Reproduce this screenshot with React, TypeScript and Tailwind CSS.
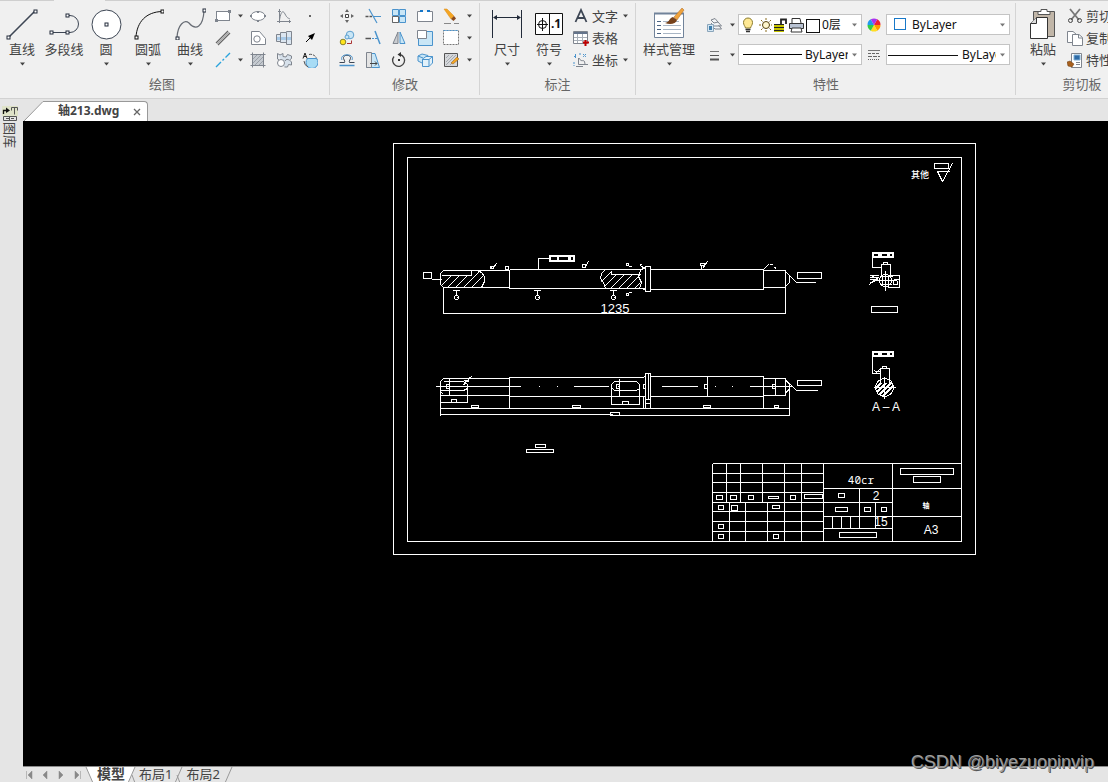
import type { ReactNode } from "react";

const INK = "#3d4654";
const BLUE = "#4a93cc";
const PALE = "#c9e6f6";

function Caret({ className = "text-[#444]" }: { className?: string }) {
  return (
    <svg width="5" height="4" viewBox="0 0 5 4" className={"shrink-0 " + className} aria-hidden="true">
      <path d="M0 0.500H5L2.500 3.500Z" fill="currentColor" />
    </svg>
  );
}

function Icon({ size = 16, children }: { size?: number; children: ReactNode }) {
  return (
    <svg width={size} height={size} viewBox={`0 0 ${size} ${size}`} fill="none" stroke="#7f858e" className="shrink-0" aria-hidden="true">
      {children}
    </svg>
  );
}

function Node({ x, y, c = "#222b3a" }: { x: number; y: number; c?: string }) {
  return <rect x={x - 1.5} y={y - 1.5} width="3" height="3" fill="#fff" stroke={c} />;
}

function BigButton({ label, icon, caret = true, wide = false }: { label: string; icon: ReactNode; caret?: boolean; wide?: boolean }) {
  return (
    <button type="button" className={"flex shrink-0 flex-col items-center pt-[3px] " + (wide ? "w-[60px]" : "w-[42px]")}>
      <Icon size={32}>{icon}</Icon>
      <span className="whitespace-nowrap text-[13px] leading-[18px] text-[#444]">{label}</span>
      {caret && <Caret className="mt-1 text-[#444]" />}
    </button>
  );
}

function SmallButton({ label, children, narrow = false }: { label: string; children: ReactNode; narrow?: boolean }) {
  return (
    <button type="button" aria-label={label} className={"flex h-[22px] items-center justify-center " + (narrow ? "w-6" : "w-[26px]")}>
      <Icon>{children}</Icon>
    </button>
  );
}

function CaretButton({ label }: { label: string }) {
  return (
    <button type="button" aria-label={label} className="flex h-[22px] w-[10px] items-center justify-center">
      <Caret />
    </button>
  );
}

function RowButton({ label, caret, children }: { label: string; caret?: boolean; children: ReactNode }) {
  return (
    <button type="button" className="flex h-[22px] shrink-0 items-center whitespace-nowrap text-[13px] leading-[18px] text-[#444]">
      <Icon>{children}</Icon>
      <span className="ml-[3px] pb-px">{label}</span>
      {caret && <Caret className="ml-[5px] text-[#444]" />}
    </button>
  );
}

function Group({ title, className, children, last }: { title: string; className: string; children: ReactNode; last?: boolean }) {
  return (
    <section
      aria-label={title}
      className={"mt-[2px] mb-[3px] flex shrink-0 flex-col justify-between pt-[2px] pb-[2px] " + (last ? "" : "border-r border-[#d4d4d4] ") + className}
    >
      <div className="flex">{children}</div>
      <h2 className="text-center text-[13px] leading-[18px] text-[#666]">{title}</h2>
    </section>
  );
}

function DrawGroup() {
  return (
    <Group title="绘图" className="w-[330px] pr-[6px] pl-px">
      <BigButton label="直线" icon={<><path d="M3 29L29 3" stroke={INK} strokeWidth="1.600" /><Node x={2.5} y={29.5} /><Node x={29.5} y={3.5} /></>} />
      <BigButton label="多段线" caret={false} icon={<><path d="M3 24.500H19M19 7.500H22A8.500 8.500 0 0 1 22 24.500H19" stroke={INK} /><Node x={3.5} y={24.5} /><Node x={19.5} y={24.5} /><Node x={19.5} y={7.5} /></>} />
      <BigButton label="圆" icon={<><circle cx="16.500" cy="16.500" r="14.500" fill="#fff" stroke={INK} /><Node x={16.5} y={16.5} /></>} />
      <BigButton label="圆弧" icon={<><path d="M4 29C5 14 14 4 30 3.500" stroke="#111" /><Node x={4.5} y={29.5} c="#111" /><Node x={30.5} y={3.5} c="#111" /></>} />
      <BigButton label="曲线" icon={<><path d="M3 29C4 17 10 11 15 15C22 23 29 19 30 3" stroke="#666b73" strokeWidth="1.200" /><Node x={3.5} y={30.5} /><Node x={30.5} y={2.5} /></>} />
      <div className="grid grid-cols-[24px_10px_26px_26px_26px]">
        <SmallButton label="矩形" narrow><rect x="1.500" y="3.500" width="13" height="9" fill="#fff" /><path d="M0 11h3v3H0z M13 2h3v3h-3z" fill="#7f858e" stroke="none" /></SmallButton>
        <CaretButton label="矩形选项" />
        <SmallButton label="椭圆"><ellipse cx="8" cy="8" rx="7" ry="4.500" fill="#fff" /><path d="M0 7h2v2H0zM14 7h2v2h-2zM7 3h2v2H7zM7 12h2v2H7z" fill="#7f858e" stroke="none" /></SmallButton>
        <SmallButton label="曲线图"><path d="M3.500 1V15M1 13.500H15M5 3.500h-3M13.500 12v3" /><path d="M3.500 12C5 3 7 2 9 6S12 10 14 11" /></SmallButton>
        <SmallButton label="点"><rect x="7" y="7" width="2" height="2" fill="#666" stroke="none" /></SmallButton>

        <SmallButton label="双线" narrow><path d="M1 13L13 1M3 15L15 3" stroke="#666" strokeWidth="1.300" /><path d="M2 14L14 2" stroke="#aaa" strokeWidth="1" /></SmallButton>
        <span />
        <SmallButton label="面域"><path d="M1.500 1.500H9.500L15.500 8.500V14.500H1.500Z" fill="#fff" /><circle cx="7" cy="9" r="3.200" /></SmallButton>
        <SmallButton label="轴"><path d="M0.500 4.500H4.500V2.500H10.500V1.500H15.500V14.500H10.500V12.500H4.500V11.500H0.500Z" fill="#dce6f0" /><path d="M1 7h14v3H1z" fill="#a8cae8" stroke="none" /><path d="M4.500 4v8M10.500 3v10" /></SmallButton>
        <SmallButton label="箭头"><path d="M4 12L9 7" stroke="#000" /><path d="M13 3L6 6L10 10Z" fill="#000" stroke="none" /></SmallButton>

        <SmallButton label="构造线" narrow><path d="M1 15L6 10M7.500 8.500L9 7M10.500 5.500L15 1" stroke="#29a3dc" strokeWidth="1.400" /></SmallButton>
        <CaretButton label="构造线选项" />
        <SmallButton label="填充"><path d="M3 3H13V13H3Z" fill="#c5cad0" stroke="none" /><path d="M0.500 2.500H15.500M2.500 0.500V15.500M0.500 13.500H15.500M13.500 0.500V15.500" /><path d="M3 7L7 3M3 11L11 3M5 13L13 5M9 13L13 9" stroke="#9aa0a8" /></SmallButton>
        <SmallButton label="齿轮"><path d="M1.500 1.500L4 3L7 1.500V4.500L10 5L11.500 2.500L15.500 4V6.500L13.500 8L15.500 10V13L12.500 12.500L11.500 15H8.500M1.500 1.500V7L3 8" fill="#d7e1eb" /><circle cx="5" cy="11" r="3.500" fill="#fff" /><path d="M9 9C10 7 12 7 13 8" /></SmallButton>
        <SmallButton label="局部放大"><path d="M7 2.500A6.500 6.500 0 0 1 15 8" stroke="#555" strokeDasharray="3 1" /><path d="M5.500 6.500H14.500A6 6 0 1 1 5.500 6.500Z" fill="#a8dcf5" stroke={BLUE} /><path d="M2 9A7 7 0 0 0 6 15" stroke="#555" /><path d="M1 6.500L3 1L5 6.500M2 4.500H4.500" stroke="#222" /></SmallButton>
      </div>
    </Group>
  );
}

function ModifyGroup() {
  return (
    <Group title="修改" className="w-[150px] pr-[3px] pl-1">
      <div className="grid grid-cols-[26px_26px_26px_26px_26px_8px]">
        <SmallButton label="移动"><path d="M6.500 6.500h3v3h-3z" fill="#fff" stroke="#444" /><path d="M8 1L10 4H6zM8 15L6 12h4zM1 8L4 6v4zM15 8L12 10V6z" fill="#666" stroke="none" /></SmallButton>
        <SmallButton label="修剪"><path d="M0.500 8.500H7" stroke="#555" strokeWidth="1.500" strokeDasharray="3 1" /><path d="M8 8.500H16" stroke={BLUE} /><path d="M4 1L12 15" stroke={BLUE} strokeWidth="1.200" /></SmallButton>
        <SmallButton label="阵列"><path d="M1.500 1.500h6v6h-6zM8.500 1.500h6v6h-6zM1.500 8.500h6v6h-6zM8.500 8.500h6v6h-6z" fill={PALE} stroke={BLUE} /><path d="M1.500 8.500h6v6h-6z" fill="#fff" stroke="#666" /></SmallButton>
        <SmallButton label="打断"><path d="M4 3.500H0.500V13.500H15.500V3.500H12" fill="#fff" /><path d="M3 2h3v2H3zM10 2h3v2h-3z" fill="#1676c8" stroke="none" /></SmallButton>
        <SmallButton label="删除"><path d="M1 1L4 1L11 8L8 11Z" fill="#f5a623" stroke="#d88b1b" strokeWidth="0.500" /><path d="M8 11L11 8L13 10.500L10.500 13Z" fill="#8a4b20" stroke="none" /><path d="M1 15.500H8M11 15.500H16" stroke="#888" /></SmallButton>
        <CaretButton label="删除选项" />

        <SmallButton label="复制对象"><circle cx="11" cy="5" r="3.800" fill={PALE} stroke="#5d9fce" /><circle cx="8" cy="7" r="2" fill={PALE} stroke="#5d9fce" /><circle cx="4" cy="12" r="2.800" fill="#ffe41a" stroke="#8b8430" /><path d="M8 13.500H12.500V10.500" stroke="#a33" /></SmallButton>
        <SmallButton label="延伸"><path d="M0.500 8.500H6" stroke="#555" strokeWidth="1.500" /><path d="M7 8.500H12" stroke={BLUE} strokeDasharray="2 1" /><path d="M10 1L15 14" stroke={BLUE} strokeWidth="1.500" /></SmallButton>
        <SmallButton label="镜像"><path d="M7 2V13.500H2Z" fill="#c9ccd0" /><path d="M9 2V13.500H14Z" fill={PALE} stroke={BLUE} /></SmallButton>
        <SmallButton label="缩放"><path d="M1.500 1.500H15.500V15.500H1.500Z" fill={PALE} stroke={BLUE} /><path d="M0.500 0.500H9.500V8.500H0.500Z" fill="#fff" /></SmallButton>
        <SmallButton label="选择框"><path d="M0.500 0.500H15.500V14.500H0.500Z" fill="#fff" stroke="#777" strokeDasharray="2 1" /><path d="M0.500 0.500H15.500" stroke={BLUE} strokeDasharray="2 1" /></SmallButton>
        <CaretButton label="选择框选项" />

        <SmallButton label="偏移"><path d="M0.500 10.500H5.500C6.500 9 4 7 4.500 5.500C5 2.500 11 2.500 11.500 5.500C12 7 9.500 9 10.500 10.500H15.500" stroke={INK} /><path d="M0.500 13.500H15.500" stroke={BLUE} strokeWidth="1.500" /><path d="M3 8C0 1 16 1 13 8" stroke={BLUE} /></SmallButton>
        <SmallButton label="拉伸"><path d="M1.500 1.500H10L14.500 15.500H1.500Z" fill={PALE} stroke={BLUE} /><path d="M1.500 0.500H6.500V15.500H1.500Z" fill="#e4e4e4" /><path d="M5 11.500H12M10 9.500L12 11.500L10 13.500" stroke="#444" /></SmallButton>
        <SmallButton label="旋转"><path d="M9 2.500A6 6 0 1 1 3 4.500" stroke="#444" strokeWidth="1.300" /><path d="M10 0V5L6.500 2.500Z" fill="#333" stroke="none" /><rect x="7" y="7" width="2" height="2" fill="#333" stroke="none" /></SmallButton>
        <SmallButton label="复制实体"><path d="M1 4L5 2L11 3.500V9L6 11.500L1 9Z" fill={PALE} stroke={BLUE} /><path d="M5.500 7L9 4.500H15.500V11L12 14.500H5.500Z" fill="#e2f1fa" stroke={BLUE} /><path d="M5.500 7.500H12V14.500M12 7.500L15.500 4.500M1 4L6 6" stroke={BLUE} /></SmallButton>
        <SmallButton label="编辑填充"><path d="M1.500 1.500H14.500V14.500H1.500Z" fill="#d5d7da" stroke="#555" /><path d="M3 6L6 3M3 10L10 3M3 13L13 3M7 13L13 7" stroke="#a3a8ae" /><path d="M8 11L14 5L16 7L10 12Z" fill="#f5a623" stroke="#8a5b20" strokeWidth="0.500" /></SmallButton>
        <CaretButton label="编辑填充选项" />
      </div>
    </Group>
  );
}

function AnnotateGroup() {
  return (
    <Group title="标注" className="w-[156px]">
      <div className="flex pl-[6px]">
        <BigButton label="尺寸" icon={<><path d="M1.500 2V30M30.500 2V30M3 9.500H29" stroke="#222b3a" /><path d="M2 9.500L6 7v5zM30 9.500L26 7v5z" fill="#222b3a" stroke="none" /></>} />
        <BigButton label="符号" icon={<><path d="M2.500 5.500H29.500V26.500H2.500ZM16.500 5.500V26.500" fill="#fff" stroke="#111" /><circle cx="9.500" cy="16.500" r="4" stroke="#111" /><path d="M4 16.500H15M9.500 10V23" stroke="#111" /><text x="18" y="20" fontSize="12" fontWeight="700" fontFamily="Noto Sans, sans-serif" fill="#111" stroke="none">.1</text></>} />
        <div className="flex flex-col pl-[3px]">
          <RowButton label="文字" caret><path d="M2.500 14L8 2L13.500 14M4.500 10H11.500" stroke={INK} strokeWidth="1.800" /></RowButton>
          <RowButton label="表格"><path d="M0.500 1.500H14.500V13.500H0.500Z" fill="#fff" /><path d="M1 2H14V4H1Z" fill="#64748b" stroke="none" /><path d="M1 7.500H14M1 10.500H14M4.500 4V13M9.500 4V13" stroke="#a9b0b8" /><path d="M12.500 10V16M10 12.500H16" stroke="#c00000" strokeWidth="2" /></RowButton>
          <RowButton label="坐标" caret><path d="M1 4.500h3M2.500 2v4M10 2l3 3M13 2l-3 3M1 10v4M6 2h2" stroke={BLUE} strokeDasharray="2 1" /><path d="M5.500 6V12.500H15M6 6C9 12 11 5 12 12M3 14.500H10" /></RowButton>
        </div>
      </div>
    </Group>
  );
}

function ComboBox({ label, value, lead, options }: { label: string; value: string; lead: ReactNode; options: string[] }) {
  return (
    <div className="flex h-[21px] w-[124px] items-center border border-[#c4c4c4] bg-white pr-1 text-[#111]">
      {lead}
      <select aria-label={label} defaultValue={value} className="h-[19px] min-w-0 flex-1 appearance-none overflow-hidden bg-transparent p-0 text-[12px] leading-[19px]">
        {[value, ...options].map((o) => (
          <option key={o}>{o}</option>
        ))}
      </select>
      <Caret className="ml-1 text-[#777]" />
    </div>
  );
}

const WHEEL = ["#e23", "#f90", "#fd2", "#3c4", "#29e", "#a3e"];

function PropertiesGroup() {
  return (
    <Group title="特性" className="w-[380px] pr-[2px] pl-[3px]">
      <BigButton
        wide
        label="样式管理"
        icon={
          <>
            <path d="M1.500 5.500H30.500V29.500H1.500Z" fill="#fff" stroke="#71839a" />
            <path d="M1 5.500H31" stroke="#71839a" strokeWidth="2" />
            <path d="M4 13.500h4M4 17.500h4M4 21.500h4M4 25.500h4" stroke="#4b6382" />
            <path d="M10 13.500h16M10 17.500h18M10 21.500h18M10 25.500h18" stroke="#a9b6c5" />
            <path d="M21 9L29 0L31 2L24 12Z" fill="#f0a33c" stroke="#a86622" strokeWidth="0.500" />
            <path d="M12 15C17 14 16 10 20 9L24 12C23 16 17 17 12 15Z" fill="#76421c" stroke="none" />
          </>
        }
      />
      <div className="grid grid-cols-[20px_14px_124px_24px_124px] content-start items-center justify-items-center gap-y-[9px] pt-[9px] pl-[5px]">
        <button type="button" aria-label="图层工具" className="flex items-center">
          <Icon><path d="M5 3L9 1.500L12 5L8 6ZM5 6L8 9H15.500L12 5M6 9L9 12H15.500L12.500 8" fill="#f2f4f6" /><path d="M1.500 7.500h6v7h-6z" fill="#d4e6f3" stroke="#8aa5ba" /><path d="M3 9h3v4H3z" fill="#3f7fae" stroke="none" /></Icon>
        </button>
        <button type="button" aria-label="图层工具选项" className="flex pl-[2px]"><Caret /></button>
        <ComboBox
          label="图层"
          value="0层"
          options={["中心线层", "虚线层"]}
          lead={
            <span className="flex shrink-0 items-center pr-[2px] pl-px">
              <Icon><path d="M5.500 11C5 9 3.500 8 3.500 5.500a4.500 4.500 0 0 1 9 0C12.500 8 11 9 10.500 11Z" fill="#ffe994" stroke="#8a7a2d" /><path d="M5.500 12.500h5M6 14.500h4" stroke="#333" strokeWidth="1.500" /></Icon>
              <Icon><circle cx="10" cy="8" r="3.500" fill="#fff6cc" stroke="#55410d" /><path d="M10 1v2M10 13v2M3 8h2M15 8h1M5 3l1.500 1.500M15 3l-1.500 1.500M5 13l1.500-1.500M15 13l-1.500-1.500" stroke="#8a6d1d" /></Icon>
              <Icon><path d="M2 7H12V15H2Z" fill="#c6c400" stroke="none" /><path d="M2 7.500H12M2 10.500H12M2 13.500H12" stroke="#222" /><path d="M9 7V2.500H14V7" stroke="#222" strokeWidth="1.800" /></Icon>
              <Icon><path d="M4 6V1.500H12L13 6" fill="#fff" stroke="#333" /><path d="M1.500 6.500H15.500V11.500H1.500Z" fill="#b8c2d2" stroke="#333" /><path d="M4 11L3 15H14L13 11Z" fill="#fff" stroke="#333" /></Icon>
              <Icon><rect x="2.500" y="2.500" width="13" height="13" fill="#fff" stroke="#111" /></Icon>
            </span>
          }
        />
        <button type="button" aria-label="颜色" className="flex">
          <svg width="14" height="14" viewBox="-7 -7 14 14" aria-hidden="true">
            {WHEEL.map((c, i) => (
              <path key={c} d="M0 0L6.500 0A6.500 6.500 0 0 1 3.250 5.630Z" fill={c} transform={`rotate(${i * 60 - 60})`} />
            ))}
          </svg>
        </button>
        <ComboBox label="颜色" value="ByLayer" options={["ByBlock"]} lead={<svg width="25" height="19" className="shrink-0" aria-hidden="true"><rect x="7.500" y="3.500" width="11" height="11" fill="#fff" stroke="#1878c8" /></svg>} />

        <button type="button" aria-label="线宽" className="flex"><Icon><path d="M4 4.500H13" stroke="#777" /><path d="M4 8.500H13" stroke="#555" /><path d="M4 12.500H13" stroke="#555" strokeWidth="2" /></Icon></button>
        <button type="button" aria-label="线宽选项" className="flex pl-[2px]"><Caret /></button>
        <ComboBox label="线宽" value="ByLayer" options={["ByBlock"]} lead={<svg width="66" height="19" className="shrink-0" aria-hidden="true"><path d="M4 9.500H63" stroke="#000" /></svg>} />
        <button type="button" aria-label="线型" className="flex"><Icon><path d="M2 3.500H14" stroke="#777" /><path d="M2 6.500H14" stroke="#666" strokeDasharray="3 1" /><path d="M2 9.500H14" stroke="#666" strokeDasharray="4 1" /><path d="M2 12.500H14" stroke="#666" strokeDasharray="1 1" /></Icon></button>
        <ComboBox label="线型" value="ByLayer" options={["ByBlock"]} lead={<svg width="75" height="19" className="shrink-0" aria-hidden="true"><path d="M1 10.500H71" stroke="#111" /></svg>} />
      </div>
    </Group>
  );
}

function ClipboardGroup() {
  return (
    <Group title="剪切板" className="w-[132px]" last>
      <div className="flex pl-[6px]">
        <BigButton
          label="粘贴"
          icon={
            <>
              <path d="M6.500 3.500H27.500V28.500H6.500Z" fill="#c1b6a8" stroke="#555" />
              <path d="M11 6.500V3.500H14V1.500H20V3.500H23V6.500Z" fill="#fff" stroke="#555" />
              <path d="M9.500 9.500H20.500V30.500H3.500V15.500Z" fill="#fff" stroke="#333" />
              <path d="M9.500 9.500V15.500H3.500" fill="#ddd" stroke="#333" />
            </>
          }
        />
        <div className="flex flex-col pl-[3px]">
          <RowButton label="剪切"><path d="M3 1L12 12M13 1L4 12" stroke="#777" strokeWidth="1.800" /><circle cx="3.500" cy="12.500" r="2" stroke="#444" /><circle cx="12.500" cy="12.500" r="2" stroke="#444" /></RowButton>
          <RowButton label="复制"><path d="M0.500 1.500H6L9.500 4.500V12.500H0.500Z" fill="#fff" /><path d="M5.500 4.500H12L15.500 7.500V15.500H5.500Z" fill="#fff" /><path d="M11.500 4.500V8H15" /></RowButton>
          <RowButton label="特性匹配"><path d="M4.500 1.500H14.500V15.500H4.500Z" fill="#fff" /><path d="M7 3H13V8H7Z" fill="#2e6ba6" stroke="#7fb0d8" /><path d="M9 10.500h4M9 12.500h4" /><path d="M0 10L3 9L7 12L5 15L1 14Z" fill="#a8601d" stroke="#6b3b10" strokeWidth="0.500" /></RowButton>
        </div>
      </div>
    </Group>
  );
}

/* ---------- drawing ---------- */

type Box = [number, number, number, number];

const BOXES: Box[] = [
  [393, 143, 975, 554], [407, 157, 961, 541],
  [423, 272, 431, 278], [505, 266, 508, 269], [626, 263, 628, 265], [626, 293, 628, 295],
  [645, 266, 650, 291], [797, 272, 821, 278], [871, 306, 897, 312],
  [446, 384, 449, 388], [451, 399, 456, 402], [471, 405, 478, 407], [572, 405, 580, 407],
  [610, 412, 619, 415], [616, 384, 619, 388], [622, 401, 628, 404], [704, 384, 707, 388],
  [772, 384, 775, 388], [703, 405, 710, 407], [774, 405, 778, 407], [797, 380, 821, 385],
  [645, 373, 650, 399], [643, 384, 645, 388], [535, 444, 545, 447], [526, 449, 553, 452],
  [934, 163, 948, 168],
  [900, 468, 953, 474], [913, 476, 940, 482], [716, 495, 722, 499], [730, 495, 736, 499],
  [748, 495, 753, 499], [768, 496, 778, 498], [790, 495, 795, 499], [804, 494, 822, 498],
  [718, 505, 723, 509], [731, 505, 737, 510], [772, 505, 779, 508], [718, 524, 723, 528],
  [718, 534, 723, 538], [773, 534, 778, 538], [838, 493, 844, 497], [835, 507, 847, 511],
  [864, 507, 870, 511], [881, 507, 886, 511], [839, 532, 876, 537],
];

const ROWS = [463, 473, 482, 492, 502, 511, 521, 531];

function Frame({ x, y, w, h }: { x: number; y: number; w: number; h: number }) {
  const hole = h - 4;
  return (
    <g stroke="none" shapeRendering="crispEdges">
      <rect x={x} y={y} width={w} height={h} fill="#fff" />
      <path d={`M${x + 2} ${y + 2}h${hole * 2}v${hole}h-${hole * 2}zM${x + 10} ${y + 2}h${w - 17}v${hole}h-${w - 17}zM${x + w - 4} ${y + 2}h2v${hole}h-2z`} fill="#000" />
    </g>
  );
}

function Datum({ x }: { x: number }) {
  return (
    <g>
      <path d={`M${x - 4} 290H${x + 3}M${x} 290V295`} />
      <circle cx={x} cy="297" r="2" />
      <path d={`M${x} 297h1`} />
    </g>
  );
}

function Drawing() {
  return (
    <svg
      role="img"
      aria-label="轴零件图"
      width="583"
      height="412"
      viewBox="393 143 583 412"
      className="mt-[22px] ml-[370px] shrink-0"
      fill="none"
      stroke="#fff"
      fontFamily="Liberation Sans, Arial, sans-serif"
    >
      <defs>
        <clipPath id="hatchLeft"><path d="M443 275H471V270H477C484 274 487 281 481 287H443L440 284Z" /></clipPath>
        <clipPath id="hatchMid"><path d="M603 270H611V274H640V288H605C600 282 598 276 603 270Z" /></clipPath>
        <clipPath id="hatchEnd"><circle cx="884" cy="387" r="9" /></clipPath>
      </defs>
      <g transform="translate(0.5 0.5)" shapeRendering="crispEdges">
        {BOXES.map(([a, b, c, d]) => (
          <rect key={`${a}-${b}-${c}-${d}`} x={a} y={b} width={c - a} height={d - b} />
        ))}

        {/* upper view */}
        <path d="M431 279H441M509 270H443L440 273V284L443 287H509M441 275H471V270M509 269V288H645M509 269H641L645 267M645 289L641 288" />
        <path d="M477 270L481 272L484 276V281L481 287M604 270L601 273L600 278L603 282L605 288M611 270V274H640M640 270L638 276L641 282L639 288" />
        <path clipPath="url(#hatchLeft)" d="M430 288l20-20M438 288l20-20M446 288l20-20M454 288l20-20M462 288l20-20M470 288l20-20" />
        <path clipPath="url(#hatchMid)" d="M593 289l20-20M601 289l20-20M609 289l20-20M617 289l20-20M625 289l20-20M633 289l20-20" />
        <path d="M650 269H763V289H650M763 270H785V287H763M785 271L789 275V282L785 286M786 272L796 282H815" />
        <path d="M538 269V258H549M490 266l2 2 4-5M490 266h3v2h-3zM582 264h3v3h-3zM584 268l4-7M628 266h3M628 292h3M640 265l5 4M639 264h2M700 263h4v2h-4zM702 268l5-7M701 268v-3M763 269l5-5M769 264h3M773 267h2v1" />
        <path d="M443 287V313H785V287" />
        <Datum x={456} />
        <Datum x={537} />
        <Datum x={613} />

        {/* upper section */}
        <path d="M872 257V267H881M881 276V264H890V276M883 264V262H887V264M887 275H899V287H887M893 279h6M893 279v5h4v-4" />
        <circle cx="885" cy="280" r="6" />
        <path d="M885 270V290M876 280H896M879 276h13M880 284h11M882 275v10M888 275v11M869 275h9M869 277h9M872 276l6 2M869 279h8M869 282h3l5-3M869 284l8-7" />

        {/* lower view */}
        <path d="M435 386H520M538 386h1M556 386h1M573 386H608M617 386H619M661 386H697M714 386h1M731 386h1M749 386H791" />
        <path d="M509 378H443L440 381V415M440 395H509M509 408V377H643L645 375M509 396H645M449 378V395M443 381H463L467 384V388L463 390H440M467 387V402H440M440 391l3 3" />
        <path d="M463 385l2-4 3-1 1-3 3-1M464 380l5 1" />
        <path d="M440 408H789M440 414H612M619 415H789V386" />
        <path d="M614 381H636L639 384V388L636 390H614L611 387V384ZM611 387V404H639V387M619 378V395" />
        <path d="M648 373V399M643 396V408M645 399V408M650 399V408M645 403H650" />
        <path d="M650 376H763V408M650 396H763M763 378H785V395H763M775 378V395M707 376V396M785 379L789 384V388L785 393M786 380L796 390H817" />

        {/* lower section */}
        <path d="M872 356V373H880M875 371h4M874 370l2 2 3-3" />
        <g clipPath="url(#hatchEnd)"><circle cx="884" cy="387" r="9" /><path strokeWidth="2" d="M868 390l16-16M870 393l18-18M872 396l20-20M875 398l20-20M879 399l18-18" /></g>
        <path fill="#000" d="M880 382V368H889V382" />
        <path d="M882 368V366H886V368M884 376V398M873 387H895" />
        <circle cx="884" cy="387" r="9" />

        {/* surface finish mark */}
        <path d="M937 171H949M937 171L942 181L952 163" />

        {/* title block */}
        <path d="M712 463V541M823 463V541M892 463V541M712 463H961M784 463V541M801 463V541M726 463V502M740 463V502M762 463V502M729 502V541M745 502V541M767 502V541" />
        {ROWS.map((y) => (
          <path key={y} d={`M712 ${y}H823`} />
        ))}
        <path d="M823 488H961M823 502H892M823 516H961M823 528H892M859 488V528M875 502V528M832 516V528M841 516V528M850 516V528" />
      </g>
      <Frame x={549} y={255} w={26} h={7} />
      <Frame x={872} y={252} w={22} h={6} />
      <Frame x={872} y={351} w={22} h={6} />
      <g fill="#fff" stroke="none" textAnchor="middle" fontSize="12">
        <text x="615" y="313" fontSize="13">1235</text>
        <text x="886" y="411">A – A</text>
        <text x="861" y="484" fontSize="11" fontFamily="Noto Sans Mono, Liberation Mono, monospace">40cr</text>
        <text x="876" y="500">2</text>
        <text x="881" y="526">15</text>
        <text x="931" y="534">A3</text>
        <text x="926" y="508" fontSize="7" fontWeight="700" fontFamily="Noto Sans CJK SC, sans-serif">轴</text>
        <text x="920" y="178" fontSize="9" fontWeight="500" fontFamily="Noto Sans CJK SC, sans-serif">其他</text>
      </g>
    </svg>
  );
}

/* ---------- window parts ---------- */

function DocumentTabs() {
  return (
    <div className="flex h-[22px] items-end bg-[#e5e5e5] pl-px">
      <div className="flex h-5 items-center">
        <svg width="20" height="20" className="shrink-0" aria-hidden="true"><path d="M0 20L19 0.500H20V20Z" fill="#fff" /><path d="M0 20L19 0.500H20" fill="none" stroke="#999" /></svg>
        <div className="flex h-5 items-center rounded-tr-sm border-t border-r border-[#999] bg-white pl-[14px]">
          <a href="#drawing" className="pb-[2px] text-[12px] leading-[18px] font-bold text-[#444]">轴213.dwg</a>
          <button type="button" aria-label="关闭" className="flex h-[18px] w-7 items-center justify-center pl-[7px]">
            <svg width="8" height="8" aria-hidden="true"><path d="M1 1L7 7M7 1L1 7" stroke="#666" strokeWidth="1.300" /></svg>
          </button>
        </div>
      </div>
    </div>
  );
}

function Divider() {
  return (
    <svg width="14" height="16" className="shrink-0" aria-hidden="true"><path d="M10 0L3 16M5 8L8 16" stroke="#999" fill="none" /></svg>
  );
}

const NAV = [
  { label: "第一个", d: "M2.500 4V12M8 4V12L4 8Z" },
  { label: "上一个", d: "M7 4V12L3 8Z" },
  { label: "下一个", d: "M3 4V12L7 8Z" },
  { label: "最后一个", d: "M8.500 4V12M3 4V12L7 8Z" },
];

function LayoutTabs() {
  return (
    <div className="flex h-4 items-start overflow-hidden border-t border-[#8a8a8a] bg-[#e5e5e5] text-[13px] text-[#444]">
      {NAV.map((n) => (
        <button key={n.label} type="button" aria-label={n.label} className="flex h-4 w-4 shrink-0 items-center justify-center first:-ml-[2px]">
          <svg width="11" height="16" aria-hidden="true"><path d={n.d} fill="#888" stroke="#888" strokeWidth="0.500" /></svg>
        </button>
      ))}
      <svg width="12" height="16" className="shrink-0" aria-hidden="true"><path d="M1 0H12V16H8Z" fill="#fff" /><path d="M1 0L8 16" stroke="#999" /></svg>
      <button type="button" className="h-4 shrink-0 bg-white text-[14px] leading-[14px] font-bold"><span className="block h-4">模型</span></button>
      <svg width="14" height="16" className="shrink-0" aria-hidden="true"><path d="M0 0H10L3 16H0Z" fill="#fff" /><path d="M10 0L3 16M7 8L10 16" stroke="#999" fill="none" /></svg>
      <button type="button" className="h-4 shrink-0 leading-[14px]"><span className="block h-4">布局1</span></button>
      <Divider />
      <button type="button" className="h-4 shrink-0 leading-[14px]"><span className="block h-4">布局2</span></button>
      <svg width="14" height="16" className="shrink-0" aria-hidden="true"><path d="M12 0L5 16" stroke="#999" fill="none" /></svg>
    </div>
  );
}

export default function App() {
  return (
    <div className="relative flex min-h-screen flex-col overflow-hidden bg-[#e5e5e5] font-['Noto_Sans','Noto_Sans_CJK_SC',sans-serif]">
      <header className="flex h-[99px] flex-col border-b border-[#d2d2d2] bg-[#f0f0f0]">
        <div className="flex h-px">
          <div className="w-[54px] bg-[#cfcfcf]" />
          <div className="w-[51px]" />
          <div className="flex-1 bg-[#cfcfcf]" />
        </div>
        <div className="flex flex-1 overflow-hidden">
          <DrawGroup />
          <ModifyGroup />
          <AnnotateGroup />
          <PropertiesGroup />
          <ClipboardGroup />
        </div>
      </header>

      <div className="flex flex-1">
        <aside className="flex w-[23px] shrink-0 flex-col items-center pt-[7px] pr-[3px]">
          <button type="button" className="flex flex-col items-center">
            <Icon>
              <path d="M0 0H16V10H0Z" fill="#dfe3c8" stroke="none" />
              <path d="M1.500 8V4.500H5" stroke="#111" strokeWidth="1.300" />
              <path d="M4 1.500L8 4.500L4 7Z" fill="#111" stroke="none" />
              <path d="M9.500 4.500V1.500H15.500V4.500M12.500 2V8.500" stroke="#555" />
              <path d="M1.500 10.500H14.500V14.500H1.500ZM4 12.500h3M9 12.500h3M7.500 10v5" stroke="#555" />
            </Icon>
            <span className="text-[13px] leading-[16px] text-[#444] [text-orientation:sideways] [writing-mode:vertical-rl]">图库</span>
          </button>
        </aside>
        <div className="flex min-w-0 flex-1 flex-col">
          <DocumentTabs />
          <main id="drawing" className="flex flex-1 items-start overflow-hidden bg-black">
            <Drawing />
          </main>
          <LayoutTabs />
        </div>
      </div>

      <p className="absolute right-[14px] bottom-2 text-[18px] leading-[24px] text-[#9c9c9c] font-['Liberation_Sans',sans-serif] [text-shadow:1px_1px_0_#555]">CSDN @biyezuopinvip</p>
    </div>
  );
}
